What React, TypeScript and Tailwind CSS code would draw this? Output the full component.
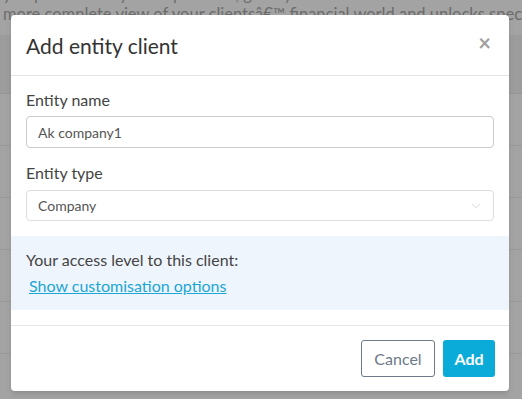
import { ChevronDown } from 'lucide-react';

const font = { fontFamily: 'Lato, "Open Sans", sans-serif' };

function Backdrop() {
  return (
    <div className="w-full h-full bg-[#a3a3a3]">
      <div className="h-[35px] px-[3px] text-[16.5px] leading-[20px] text-[#6c6c6c] whitespace-nowrap overflow-hidden">
        <div className="-mt-[16px]">you personalise your experience, gives you a</div>
        <div>more complete view of your clientsâ€™ financial world and unlocks special features</div>
      </div>
      <div className="h-[59px] bg-[#9c9c9c] border-b border-[#959595]" />
      {[0, 1, 2, 3, 4].map((i) => (
        <div key={i} className="h-[52px] border-b border-[#989898]" />
      ))}
    </div>
  );
}

export default function App() {
  return (
    <div className="relative w-[522px] h-[399px] overflow-hidden" style={font}>
      <Backdrop />
      <div className="absolute left-[11px] top-[15px] w-[498px] bg-white rounded-[4px] shadow-md">
        <div className="h-[61px] px-[15px] flex items-center justify-between border-b border-[#e5e5e5]">
          <h2 className="text-[21px] text-[#333] mt-[2px]">Add entity client</h2>
          <span className="text-[22px] font-bold text-[#a0a0a0] leading-none mr-[3px] -mt-[4px]">×</span>
        </div>
        <div className="px-[15px] pt-[13px]">
          <label className="block text-[16px] leading-[21px] text-[#444]">Entity name</label>
          <div className="mt-[6px] h-[32px] border border-[#cccccc] rounded-[4px] flex items-center px-[11px] text-[14px] text-[#555]">
            Ak company1
          </div>
          <label className="block mt-[14px] text-[16px] leading-[21px] text-[#444]">Entity type</label>
          <div className="mt-[7px] h-[31px] border border-[#dddddd] rounded-[4px] flex items-center justify-between pl-[11px] pr-[10px] text-[14px] text-[#555]">
            <span>Company</span>
            <ChevronDown size={14} strokeWidth={1} className="text-[#bbbbbb]" />
          </div>
        </div>
        <div className="mt-[15px] h-[74px] bg-[#eff5fc] px-[15px] pt-[13px]">
          <p className="text-[16px] leading-[21px] text-[#444]">Your access level to this client:</p>
          <a className="inline-block mt-[5px] ml-[3px] text-[16px] leading-[21px] text-[#1aa6d6] underline">
            Show customisation options
          </a>
        </div>
        <div className="mt-[15px] border-t border-[#e5e5e5] flex justify-end gap-[8px] px-[14px] pt-[14px] pb-[14px]">
          <button className="w-[74px] h-[37px] border border-[#6c7a89] rounded-[3px] text-[16px] text-[#6c7a89]">
            Cancel
          </button>
          <button className="w-[52px] h-[37px] bg-[#0aabd8] rounded-[3px] text-[16px] font-bold text-white">
            Add
          </button>
        </div>
      </div>
    </div>
  );
}
